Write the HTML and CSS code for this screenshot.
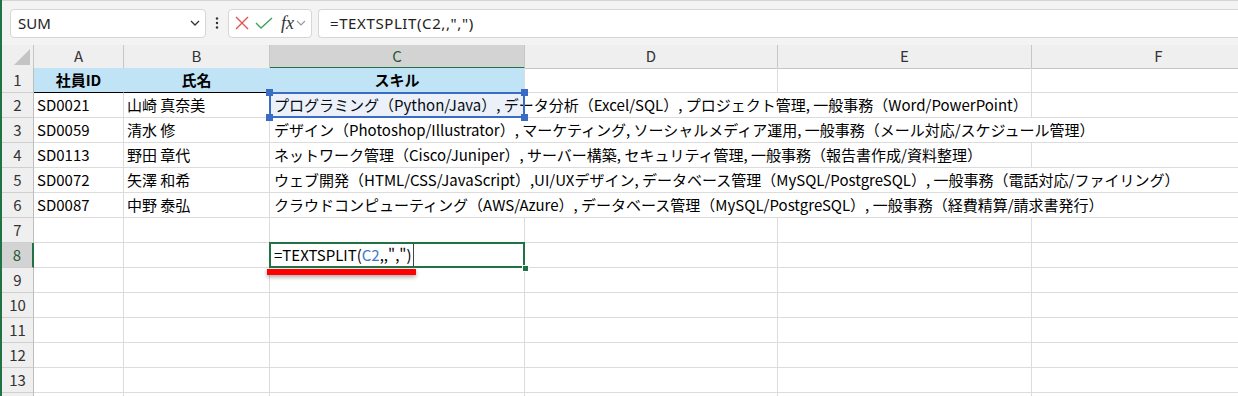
FILE: index.html
```html
<!DOCTYPE html>
<html lang="ja">
<head>
    <meta charset="UTF-8">
    <title>TEXTSPLIT</title>
    <link rel="stylesheet" href="styles.css">
</head>
<body>
<div class="app">
    <div class="formula-bar">
        <div class="name-box">
            <span>SUM</span>
            <svg class="chev" width="10" height="6" viewBox="0 0 10 6"><path d="M1 1l4 4 4-4" fill="none" stroke="#333" stroke-width="1.3"/></svg>
        </div>
        <div class="dots">
            <svg width="4" height="12" viewBox="0 0 4 12"><circle cx="2" cy="1.5" r="1.2" fill="#333"/><circle cx="2" cy="6" r="1.2" fill="#333"/><circle cx="2" cy="10.5" r="1.2" fill="#333"/></svg>
        </div>
        <div class="fx-box">
            <svg width="14" height="14" viewBox="0 0 14 14"><path d="M1 1l12 12M13 1L1 13" stroke="#e35252" stroke-width="1.4" fill="none"/></svg>
            <svg width="18" height="12" viewBox="0 0 18 12"><path d="M1 6l5 5 11-10" stroke="#3ea35c" stroke-width="1.4" fill="none"/></svg>
            <span class="fx">fx</span>
            <svg width="10" height="6" viewBox="0 0 10 6"><path d="M1 1l4 4 4-4" fill="none" stroke="#9a9a9a" stroke-width="1.2"/></svg>
        </div>
        <div class="formula-input">=TEXTSPLIT(C2,,",")</div>
    </div>

    <div class="sheet">
        <div class="row head-row">
            <div class="corner"><svg width="18" height="18" viewBox="0 0 18 18"><path d="M1 17L17 1V17Z" fill="#c4c4c4"/></svg></div>
            <div class="ch">A</div>
            <div class="ch">B</div>
            <div class="ch ch-sel">C</div>
            <div class="ch">D</div>
            <div class="ch">E</div>
            <div class="ch">F</div>
        </div>

        <div class="row">
            <div class="rh">1</div>
            <div class="cell title">社員ID</div>
            <div class="cell title">氏名</div>
            <div class="cell title title-last">スキル</div>
            <div class="cell"></div>
            <div class="cell"></div>
            <div class="cell"></div>
        </div>

        <div class="row">
            <div class="rh">2</div>
            <div class="cell">SD0021</div>
            <div class="cell">山崎 真奈美</div>
            <div class="cell span3 selected">プログラミング（Python/Java）, データ分析（Excel/SQL）, プロジェクト管理, 一般事務（Word/PowerPoint）
                <span class="sel-box"></span>
                <span class="handle tl"></span><span class="handle tr"></span>
                <span class="handle bl"></span><span class="handle br"></span>
            </div>
            <div class="cell"></div>
        </div>

        <div class="row">
            <div class="rh">3</div>
            <div class="cell">SD0059</div>
            <div class="cell">清水 修</div>
            <div class="cell span4">デザイン（Photoshop/Illustrator）, マーケティング, ソーシャルメディア運用, 一般事務（メール対応/スケジュール管理）</div>
        </div>

        <div class="row">
            <div class="rh">4</div>
            <div class="cell">SD0113</div>
            <div class="cell">野田 章代</div>
            <div class="cell span3">ネットワーク管理（Cisco/Juniper）, サーバー構築, セキュリティ管理, 一般事務（報告書作成/資料整理）</div>
            <div class="cell"></div>
        </div>

        <div class="row">
            <div class="rh">5</div>
            <div class="cell">SD0072</div>
            <div class="cell">矢澤 和希</div>
            <div class="cell span4">ウェブ開発（HTML/CSS/JavaScript）,UI/UXデザイン, データベース管理（MySQL/PostgreSQL）, 一般事務（電話対応/ファイリング）</div>
        </div>

        <div class="row">
            <div class="rh">6</div>
            <div class="cell">SD0087</div>
            <div class="cell">中野 泰弘</div>
            <div class="cell span4">クラウドコンピューティング（AWS/Azure）, データベース管理（MySQL/PostgreSQL）, 一般事務（経費精算/請求書発行）</div>
        </div>

        <div class="row">
            <div class="rh">7</div>
            <div class="cell"></div><div class="cell"></div><div class="cell"></div>
            <div class="cell"></div><div class="cell"></div><div class="cell"></div>
        </div>

        <div class="row">
            <div class="rh rh-sel">8</div>
            <div class="cell"></div>
            <div class="cell"></div>
            <div class="cell active">
                <span class="edit">=TEXTSPLIT(<span class="ref">C2</span>,,",")</span>
                <span class="active-box"></span>
                <span class="fill-handle"></span>
                <span class="underline"></span>
            </div>
            <div class="cell"></div><div class="cell"></div><div class="cell"></div>
        </div>

        <div class="row">
            <div class="rh">9</div>
            <div class="cell"></div><div class="cell"></div><div class="cell"></div>
            <div class="cell"></div><div class="cell"></div><div class="cell"></div>
        </div>
        <div class="row">
            <div class="rh">10</div>
            <div class="cell"></div><div class="cell"></div><div class="cell"></div>
            <div class="cell"></div><div class="cell"></div><div class="cell"></div>
        </div>
        <div class="row">
            <div class="rh">11</div>
            <div class="cell"></div><div class="cell"></div><div class="cell"></div>
            <div class="cell"></div><div class="cell"></div><div class="cell"></div>
        </div>
        <div class="row">
            <div class="rh">12</div>
            <div class="cell"></div><div class="cell"></div><div class="cell"></div>
            <div class="cell"></div><div class="cell"></div><div class="cell"></div>
        </div>
        <div class="row">
            <div class="rh">13</div>
            <div class="cell"></div><div class="cell"></div><div class="cell"></div>
            <div class="cell"></div><div class="cell"></div><div class="cell"></div>
        </div>
        <div class="row">
            <div class="rh"></div>
            <div class="cell"></div><div class="cell"></div><div class="cell"></div>
            <div class="cell"></div><div class="cell"></div><div class="cell"></div>
        </div>
    </div>
</div>
</body>
</html>
```

FILE: styles.css
```css
body {
    margin: 0;
    background: #fff;
    font-family: "Noto Sans CJK JP", "Noto Sans", sans-serif;
    color: #000;
}
.app {
    height: 396px;
    overflow: hidden;
    border-left: 2px solid #217346;
}

/* formula bar */
.formula-bar {
    height: 45px;
    box-sizing: border-box;
    border-top: 1px solid #d4d4d4;
    background: #f3f3f3;
    display: flex;
    align-items: center;
    padding-left: 8px;
}
.name-box {
    width: 196px;
    height: 29px;
    box-sizing: border-box;
    background: #fff;
    border: 1px solid #d6d6d6;
    border-radius: 4px;
    display: flex;
    align-items: center;
    justify-content: space-between;
    padding: 0 5px 0 7px;
    font-family: "Noto Sans", sans-serif;
    font-size: 15px;
    color: #222;
}
.dots {
    width: 22px;
    display: flex;
    justify-content: center;
}
.fx-box {
    width: 84px;
    height: 29px;
    box-sizing: border-box;
    background: #fff;
    border: 1px solid #d6d6d6;
    border-radius: 4px;
    display: flex;
    align-items: center;
    gap: 6px;
    padding-left: 6px;
}
.fx {
    font-family: "Liberation Serif", serif;
    font-style: italic;
    font-size: 18px;
    color: #333;
    margin-left: 2px;
    margin-right: -4px;
    line-height: 1;
}
.formula-input {
    flex: 1;
    height: 29px;
    box-sizing: border-box;
    margin-left: 6px;
    background: #fff;
    border: 1px solid #d6d6d6;
    border-right: none;
    border-radius: 4px 0 0 4px;
    padding-left: 11px;
    font-family: "Noto Sans", sans-serif;
    font-size: 15px;
    letter-spacing: 0.6px;
    line-height: 27px;
    color: #222;
}

/* grid */
.sheet {
    width: 1300px;
}
.row {
    display: grid;
    grid-template-columns: 32px 90px 146px 255px 253px 254px 254px;
    height: 25px;
}
.head-row {
    height: 23px;
}
.corner {
    background: #efefef;
    border-right: 1px solid #c6c6c6;
    border-bottom: 1px solid #c6c6c6;
    display: flex;
    align-items: flex-end;
    justify-content: flex-end;
    padding: 0 2px 2px 0;
}
.ch {
    background: #efefef;
    border-right: 1px solid #c6c6c6;
    border-bottom: 1px solid #c6c6c6;
    text-align: center;
    font-size: 15px;
    line-height: 22px;
    color: #333;
}
.ch-sel {
    background: #d3d3d3;
    border-bottom: 2px solid #217346;
    color: #1f5b35;
}
.rh {
    background: #efefef;
    border-right: 1px solid #bdbdbd;
    border-bottom: 1px solid #cfcfcf;
    text-align: center;
    font-size: 15px;
    line-height: 24px;
    color: #333;
}
.rh-sel {
    background: #d3d3d3;
    border-right: 2px solid #217346;
    color: #1f5b35;
}
.cell {
    border-right: 1px solid #dcdcdc;
    border-bottom: 1px solid #dcdcdc;
    padding: 0 3px;
    font-size: 15px;
    line-height: 24px;
    white-space: nowrap;
    min-width: 0;
}
.title {
    background: #c0e4f5;
    border-right-color: #c0e4f5;
    border-bottom: 1px solid #000;
    font-weight: bold;
    text-align: center;
}
.title-last {
    border-right-color: #dcdcdc;
}
.span3 {
    grid-column: span 3;
}
.span4 {
    grid-column: span 4;
}

/* selection on C2 */
.selected {
    position: relative;
    padding-left: 4px;
}
.span3, .span4 {
    padding-left: 4px;
}
.sel-box {
    position: absolute;
    left: -1px;
    top: -1px;
    width: 256px;
    height: 26px;
    box-sizing: border-box;
    border: 2px solid #3a6cc6;
    background: rgba(58, 108, 198, 0.1);
}
.handle {
    position: absolute;
    width: 7px;
    height: 7px;
    background: #3a6cc6;
}
.handle.tl { left: -4px; top: -4px; }
.handle.tr { left: 251px; top: -4px; }
.handle.bl { left: -4px; top: 21px; }
.handle.br { left: 251px; top: 21px; }

/* active cell C8 */
.active {
    position: relative;
    padding: 0;
}
.edit {
    display: inline-block;
    height: 24px;
    padding: 0 1px 0 4px;
    background: #fff;
    border-right: 1px solid #444;
}
.ref {
    color: #3a78c9;
}
.active-box {
    position: absolute;
    left: -1px;
    top: -1px;
    width: 256px;
    height: 26px;
    box-sizing: border-box;
    border: 2px solid #217346;
}
.fill-handle {
    position: absolute;
    left: 252px;
    top: 22px;
    width: 5px;
    height: 5px;
    background: #217346;
    border: 1px solid #fff;
}
.underline {
    position: absolute;
    left: -3px;
    top: 26px;
    width: 149px;
    height: 6px;
    background: #ff0000;
    box-shadow: 0 2px 4px rgba(0, 0, 0, 0.35);
}
```
